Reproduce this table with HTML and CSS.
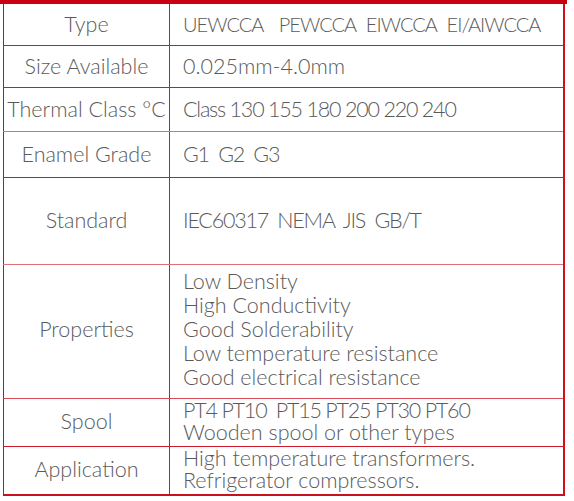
FILE: index.html
```html
<!DOCTYPE html>
<html>
<head>
<meta charset="utf-8">
<link rel="stylesheet" href="styles.css">
</head>
<body>
<div class="topbar"></div>
<table class="spec">
  <tr class="r1"><td class="k">Type</td><td class="v caps"><span class="first">UEWCCA</span> PEWCCA EIWCCA EI/AIWCCA</td></tr>
  <tr class="r2"><td class="k">Size Available</td><td class="v">0.025mm-4.0mm</td></tr>
  <tr class="r3"><td class="k">Thermal Class °C</td><td class="v digits">Class 130 155 180 200 220 240</td></tr>
  <tr class="r4"><td class="k">Enamel Grade</td><td class="v digits">G1&nbsp; G2&nbsp; G3</td></tr>
  <tr class="r5"><td class="k">Standard</td><td class="v digits">IEC60317&nbsp; NEMA&nbsp; JIS&nbsp; GB/T</td></tr>
  <tr class="r6"><td class="k">Properties</td><td class="v multi">Low Density<br>High Conductivity<br>Good Solderability<br>Low temperature resistance<br>Good electrical resistance</td></tr>
  <tr class="r7"><td class="k">Spool</td><td class="v tight"><span class="digits">PT4 PT10&nbsp; PT15 PT25 PT30 PT60</span><br>Wooden spool or other types</td></tr>
  <tr class="r8"><td class="k">Application</td><td class="v tight">High temperature transformers.<br>Refrigerator compressors.</td></tr>
</table>
</body>
</html>
```
FILE: styles.css
```css
html, body {
  margin: 0;
  padding: 0;
  background: #ffffff;
}
.topbar {
  width: 567px;
  height: 4px;
  background: #c8000f;
}
.spec {
  margin-left: 3px;
  width: 562px;
  border-collapse: collapse;
  font-family: Lato, "Noto Sans", sans-serif;
  font-weight: 300;
  font-size: 21.5px;
  color: #5a5a5a;
  table-layout: fixed;
}
.spec td {
  padding: 0 0 2px 0;
  border: 1px solid #cc1a2a;
  vertical-align: middle;
  white-space: nowrap;
  overflow: hidden;
}
.spec tr:first-child td {
  border-top: 0;
}
.spec td.k {
  width: 165px;
  text-align: center;
  border-left: 1px solid #c4101f;
}
.spec td.v {
  padding-left: 13px;
  text-align: left;
  border-right: 2px solid #d0101f;
}
.spec td.caps {
  font-size: 20px;
  letter-spacing: -1px;
  word-spacing: 6px;
}
.caps .first {
  margin-right: 5px;
}
.digits {
  letter-spacing: -1.2px;
}
.spec td.multi {
  line-height: 24px;
  padding-bottom: 5px;
}
.spec td.tight {
  line-height: 22px;
  padding-bottom: 3px;
}
.r6 td.k { padding-bottom: 5px; }
.r7 td.k, .r8 td.k { padding-bottom: 3px; }
.r1 td { height: 39px; }
.r2 td { height: 39px; }
.r3 td { height: 41px; border-bottom-color: #e0707a; }
.r4 td { height: 43px; }
.r5 td { height: 84px; border-bottom-color: #e0707a; }
.r6 td { height: 128px; border-bottom-color: #d84a58; }
.r7 td { height: 42px; }
.r8 td { height: 43px; border-bottom: 2px solid #c8101f; }
```
